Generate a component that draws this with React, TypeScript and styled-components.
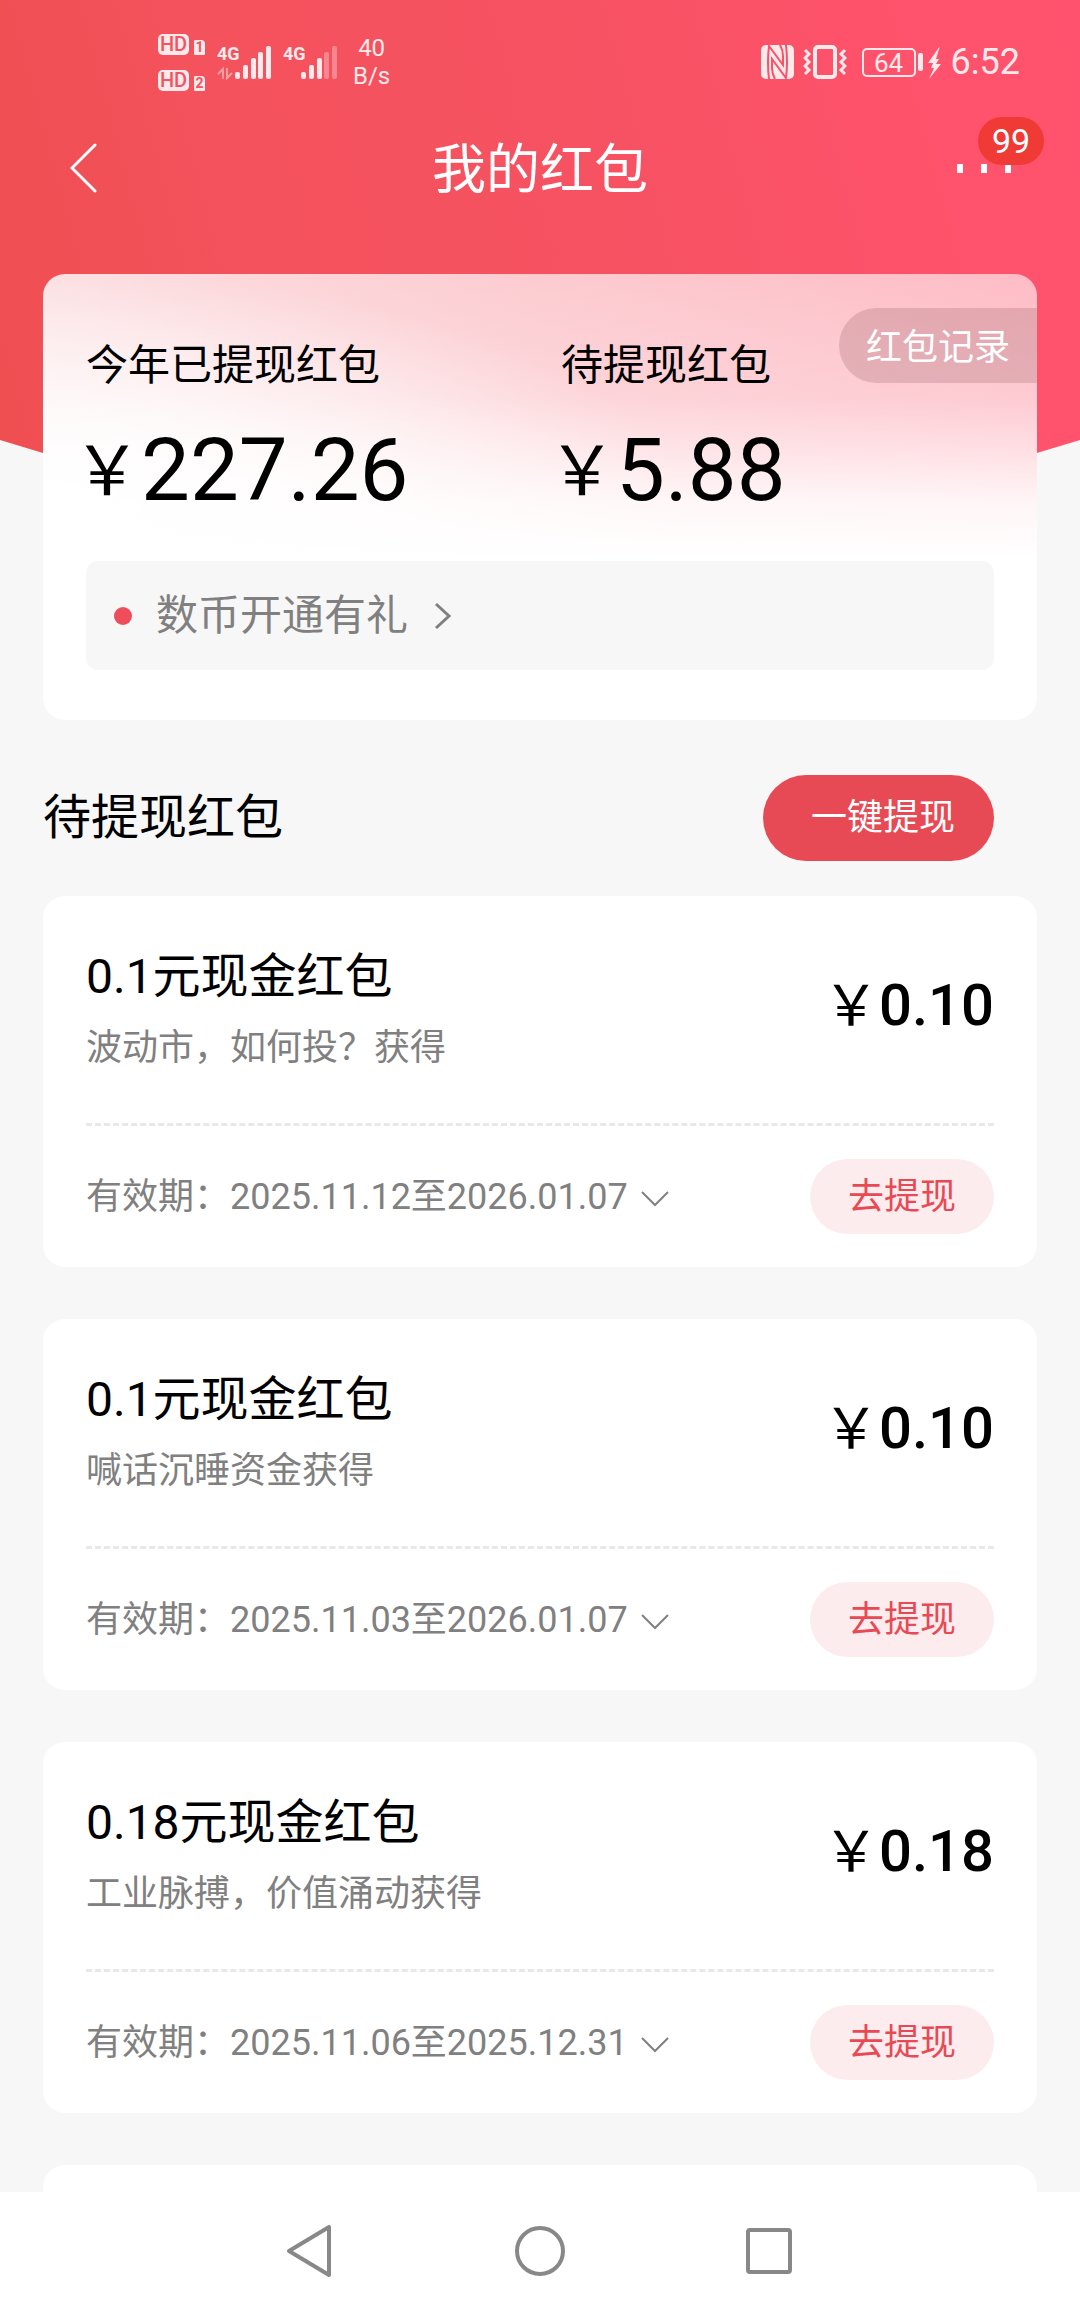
import React from "react";
import styled, { createGlobalStyle } from "styled-components";

const ink = "#000000";
const muted = "#808080";
const brand = "#e84a55";
const statusInk = "#ffe9eb";

const GlobalStyle = createGlobalStyle`
  *, *::before, *::after { box-sizing: border-box; }
  body { margin: 0; background: #f7f7f7; }
  h1, h2, h3, p, ul, dl, dd { margin: 0; padding: 0; font-weight: 400; }
  button, a {
    font: inherit; color: inherit; border: 0; padding: 0;
    background: none; text-decoration: none; cursor: pointer;
  }
  svg { display: block; flex: none; }
`;

const Shell = styled.div`
  height: 100vh;
  display: flex;
  flex-direction: column;
  font-family: Roboto, "Noto Sans CJK SC", sans-serif;
  color: ${ink};
  background: #f7f7f7;
`;

const Scroller = styled.div`
  flex: 1;
  min-height: 0;
  overflow-y: auto;
  scrollbar-width: none;
`;

const Hero = styled.div`
  position: relative;
  isolation: isolate;

  &::before {
    content: "";
    position: absolute;
    z-index: -1;
    inset: 0 0 auto;
    height: 480px;
    background: linear-gradient(75deg, #f04f52 0%, #f04f54 10%, #f4525c 24%, #f65262 56%, #ff526c 86%, #ff526e 100%);
    clip-path: polygon(0 0, 100% 0, 100% 440px, calc(100% - 86px) 466px, 86px 466px, 0 440px);
  }
`;

const StatusBar = styled.div`
  height: 124px;
  padding: 0 60px 0 158px;
  display: flex;
  align-items: center;
  justify-content: space-between;
  color: ${statusInk};
`;

const StatusGroup = styled.div<{ $gap: number }>`
  display: flex;
  align-items: center;
  gap: ${(p) => p.$gap}px;
`;

const SimStack = styled.div`
  display: grid;
  gap: 15px;
`;

const SimRow = styled.div`
  display: flex;
  align-items: flex-end;
  gap: 5px;
`;

const HdTag = styled.span`
  width: 31px;
  height: 21px;
  border-radius: 5px;
  background: ${statusInk};
  color: #f5525f;
  font-size: 20px;
  line-height: 21px;
  font-weight: 500;
  text-align: center;
`;

const SimTag = styled.span`
  width: 11px;
  height: 15px;
  border-radius: 1px 4px 1px 1px;
  background: ${statusInk};
  color: #f5525f;
  font-size: 14px;
  line-height: 15px;
  font-weight: 700;
  text-align: center;
`;

const Speed = styled.div`
  margin-left: 4px;
  font-size: 24px;
  line-height: 28px;
  text-align: center;
`;

const Battery = styled.div`
  margin-left: 6px;
  display: flex;
  align-items: center;
  gap: 2px;

  &::after {
    content: "";
    width: 5px;
    height: 18px;
    border-radius: 2px;
    background: ${statusInk};
  }
`;

const BatteryBody = styled.span`
  width: 54px;
  height: 29px;
  border: 2px solid ${statusInk};
  border-radius: 5px;
  font-size: 26px;
  line-height: 26px;
  text-align: center;
`;

const Clock = styled.time`
  font-size: 36px;
  line-height: 42px;
`;

const TitleBar = styled.header`
  height: 88px;
  padding: 0 60px;
  display: grid;
  grid-template-columns: 1fr auto 1fr;
  align-items: center;
  color: #ffffff;
`;

const Title = styled.h1`
  padding-top: 6px;
  font-size: 54px;
  line-height: 64px;
`;

const IconButton = styled.button`
  width: 48px;
  height: 64px;
  display: grid;
  place-items: center;
`;

const MoreButton = styled.button`
  position: relative;
  justify-self: end;
  width: 72px;
  height: 64px;
  display: flex;
  align-items: center;
  justify-content: center;
  gap: 18px;
`;

const Dot = styled.span`
  width: 6px;
  height: 9px;
  background: #ffffff;
`;

const Badge = styled.span`
  position: absolute;
  left: 30px;
  bottom: 35px;
  width: 66px;
  height: 48px;
  border-radius: 24px;
  background: #f03a35;
  font-size: 34px;
  line-height: 48px;
  text-align: center;
`;

const Summary = styled.section`
  position: relative;
  margin: 62px 43px 0;
  padding: 68px 43px 50px;
  border-radius: 22px;
  background:
    linear-gradient(180deg, rgba(255,255,255,0) 0%, rgba(255,255,255,0.22) 28%,
      rgba(255,255,255,0.54) 40%, rgba(255,255,255,0.85) 51%, #fff 64%),
    radial-gradient(ellipse 64% 50% at 0% 50%, #fff 0%, rgba(255,255,255,0.75) 40%, rgba(255,255,255,0) 100%),
    linear-gradient(90deg, #fce0e2 0%, #fccbd0 50%, #febcc6 100%);
`;

const Totals = styled.dl`
  display: grid;
  grid-template-columns: 1fr 1fr;
  column-gap: 42px;
`;

const TotalLabel = styled.dt`
  font-size: 42px;
  line-height: 48px;
`;

const TotalValue = styled.dd`
  margin-top: 28px;
  margin-left: -13px;
  display: flex;
  align-items: center;
  font-size: 87px;
  line-height: 104px;
`;

const TotalYen = styled.span`
  padding-bottom: 8px;
  font-family: "Noto Sans CJK SC", sans-serif;
  font-size: 68px;
  line-height: 96px;
`;

const RecordsLink = styled.a`
  position: absolute;
  top: 34px;
  right: 0;
  height: 75px;
  padding: 5px 27px 0;
  border-radius: 38px 0 0 38px;
  background: rgba(80, 20, 30, 0.15);
  color: #ffffff;
  font-size: 36px;
  line-height: 70px;
`;

const Notice = styled.a`
  margin-top: 39px;
  height: 109px;
  padding: 0 28px;
  display: flex;
  align-items: center;
  border-radius: 12px;
  background: #f7f7f7;
  color: ${muted};
  font-size: 42px;
  line-height: 48px;

  &::before {
    content: "";
    width: 18px;
    height: 18px;
    margin-right: 24px;
    border-radius: 50%;
    background: #ef4c5c;
  }

  svg { margin-left: 26px; }
`;

const ListHead = styled.div`
  margin: 55px 86px 35px 43px;
  display: flex;
  align-items: center;
  justify-content: space-between;
`;

const ListTitle = styled.h2`
  font-size: 48px;
  line-height: 56px;
`;

const Pill = styled.button<{ $solid?: boolean }>`
  flex: none;
  height: ${(p) => (p.$solid ? 86 : 75)}px;
  padding: ${(p) => (p.$solid ? "0 39px 0 48px" : "0 38px")};
  border-radius: 43px;
  background: ${(p) => (p.$solid ? brand : "#fdecee")};
  color: ${(p) => (p.$solid ? "#ffffff" : brand)};
  font-size: 36px;
  line-height: 42px;
`;

const List = styled.ul`
  list-style: none;
  display: grid;
  gap: 52px;
  padding: 0 43px 52px;
`;

const Card = styled.li`
  min-height: 371px;
  padding: 0 43px 33px;
  border-radius: 22px;
  background: #ffffff;
`;

const CardTop = styled.div`
  padding: 51px 0;
  display: flex;
  align-items: flex-start;
  justify-content: space-between;
  border-bottom: 3px dashed #e8e8e8;
`;

const CardTitle = styled.h3`
  font-size: 48px;
  line-height: 60px;
`;

const CardSource = styled.p`
  margin-top: 17px;
  color: ${muted};
  font-size: 36px;
  line-height: 48px;
`;

const Amount = styled.p`
  padding-top: 18px;
  font-size: 58px;
  line-height: 72px;
  font-weight: 500;
`;

const AmountYen = styled.span`
  font-family: "Noto Sans CJK SC", sans-serif;
  font-size: 56px;
  font-weight: 400;
`;

const CardFoot = styled.div`
  padding-top: 33px;
  display: flex;
  align-items: center;
  justify-content: space-between;
`;

const Validity = styled.button`
  display: flex;
  align-items: center;
  gap: 11px;
  color: ${muted};
  font-size: 36px;
  line-height: 42px;
`;

const NavBar = styled.nav`
  flex: none;
  height: 118px;
  display: flex;
  align-items: center;
  justify-content: center;
  gap: 170px;
  background: #ffffff;
`;

const NavButton = styled.button`
  width: 60px;
  height: 60px;
`;

const Signal = ({ active, data }: { active: number; data?: boolean }) => (
  <svg width="54" height="44" viewBox="0 -5 54 44" fill={statusInk}>
    <text x="0" y="15" fontSize="18" fontWeight="700" fontFamily="Roboto, sans-serif">
      4G
    </text>
    {data && (
      <path
        d="M6 34V24L1 29M10 23v10L15 28"
        fill="none"
        stroke={statusInk}
        strokeWidth="2"
        opacity="0.5"
      />
    )}
    {[7, 14, 21, 27, 33].map((h, i) => (
      <rect
        key={h}
        x={18 + i * 8 - (i > 2 ? 1 : 0)}
        y={34 - h}
        width="5"
        height={h}
        rx="2"
        opacity={i < active ? 1 : 0.35}
      />
    ))}
  </svg>
);

const NfcIcon = () => (
  <svg width="33" height="34" viewBox="0 0 33 34">
    <rect width="33" height="34" rx="5" fill={statusInk} />
    <path
      d="M8 34Q6 17 8 1L22 20V11Q22 5 19 0M25 0Q27 17 25 33L11 14V23Q11 29 14 34"
      fill="none"
      stroke="#fb5268"
      strokeWidth="2"
    />
  </svg>
);

const VibrateIcon = () => (
  <svg width="44" height="34" viewBox="0 0 44 34" fill="none" stroke={statusInk} strokeWidth="4">
    <rect x="12" y="2" width="20" height="30" rx="3" />
    <path d="M2 5l4 4-4 4 4 4-4 4 4 4-4 4M42 5l-4 4 4 4-4 4 4 4-4 4 4 4" strokeWidth="3" />
  </svg>
);

const BoltIcon = () => (
  <svg width="14" height="34" viewBox="0 0 14 34" fill={statusInk}>
    <path d="M12 1L0 18h5L3 23h3L1 34l12-15H8l3-5H8z" />
  </svg>
);

type Packet = { title: string; source: string; amount: string; validity: string };

const packets: Packet[] = [
  { title: "0.1元现金红包", source: "波动市，如何投？获得", amount: "0.10", validity: "2025.11.12至2026.01.07" },
  { title: "0.1元现金红包", source: "喊话沉睡资金获得", amount: "0.10", validity: "2025.11.03至2026.01.07" },
  { title: "0.18元现金红包", source: "工业脉搏，价值涌动获得", amount: "0.18", validity: "2025.11.06至2025.12.31" },
];

const totals = [
  { label: "今年已提现红包", value: "227.26" },
  { label: "待提现红包", value: "5.88" },
];

const PacketCard = ({ title, source, amount, validity }: Packet) => (
  <Card>
    <CardTop>
      <div>
        <CardTitle>{title}</CardTitle>
        <CardSource>{source}</CardSource>
      </div>
      <Amount>
        <AmountYen>￥</AmountYen>
        {amount}
      </Amount>
    </CardTop>
    <CardFoot>
      <Validity type="button">
        有效期：{validity}
        <svg width="32" height="20" viewBox="0 0 32 20" fill="none" stroke={muted} strokeWidth="2">
          <path d="M3 5l13 13L29 5" />
        </svg>
      </Validity>
      <Pill type="button">去提现</Pill>
    </CardFoot>
  </Card>
);

export default function App() {
  return (
    <Shell lang="zh-CN">
      <GlobalStyle />
      <Scroller>
        <Hero>
          <StatusBar>
            <StatusGroup $gap={12}>
              <SimStack>
                {[1, 2].map((n) => (
                  <SimRow key={n}>
                    <HdTag>HD</HdTag>
                    <SimTag>{n}</SimTag>
                  </SimRow>
                ))}
              </SimStack>
              <Signal active={5} data />
              <Signal active={3} />
              <Speed>
                40
                <br />
                B/s
              </Speed>
            </StatusGroup>
            <StatusGroup $gap={9}>
              <NfcIcon />
              <VibrateIcon />
              <StatusGroup $gap={5}>
                <Battery>
                  <BatteryBody>64</BatteryBody>
                </Battery>
                <BoltIcon />
              </StatusGroup>
              <Clock>6:52</Clock>
            </StatusGroup>
          </StatusBar>
          <TitleBar>
            <IconButton type="button" aria-label="返回">
              <svg width="28" height="52" viewBox="0 0 28 52" fill="none" stroke="#fff" strokeWidth="3" strokeLinecap="round">
                <path d="M25 3L2 26l23 23" />
              </svg>
            </IconButton>
            <Title>我的红包</Title>
            <MoreButton type="button" aria-label="更多">
              <Dot />
              <Dot />
              <Dot />
              <Badge>99</Badge>
            </MoreButton>
          </TitleBar>
          <Summary>
            <Totals>
              {totals.map((t) => (
                <div key={t.label}>
                  <TotalLabel>{t.label}</TotalLabel>
                  <TotalValue>
                    <TotalYen>￥</TotalYen>
                    {t.value}
                  </TotalValue>
                </div>
              ))}
            </Totals>
            <RecordsLink href="#records">红包记录</RecordsLink>
            <Notice href="#digital-currency">
              数币开通有礼
              <svg width="18" height="28" viewBox="0 0 18 28" fill="none" stroke={muted} strokeWidth="3">
                <path d="M2 2l13 12L2 26" />
              </svg>
            </Notice>
          </Summary>
        </Hero>
        <ListHead>
          <ListTitle>待提现红包</ListTitle>
          <Pill type="button" $solid>
            一键提现
          </Pill>
        </ListHead>
        <List>
          {packets.map((p) => (
            <PacketCard key={p.validity} {...p} />
          ))}
          <Card />
        </List>
      </Scroller>
      <NavBar>
        <NavButton type="button" aria-label="后退">
          <svg width="60" height="60" viewBox="0 0 60 60" fill="none" stroke="#888" strokeWidth="4" strokeLinejoin="round">
            <path d="M49 6v48L9 30z" />
          </svg>
        </NavButton>
        <NavButton type="button" aria-label="主页">
          <svg width="60" height="60" viewBox="0 0 60 60" fill="none" stroke="#888" strokeWidth="4">
            <circle cx="30" cy="30" r="23" />
          </svg>
        </NavButton>
        <NavButton type="button" aria-label="最近任务">
          <svg width="60" height="60" viewBox="0 0 60 60" fill="none" stroke="#888" strokeWidth="4">
            <rect x="8" y="9" width="42" height="42" rx="2" />
          </svg>
        </NavButton>
      </NavBar>
    </Shell>
  );
}
